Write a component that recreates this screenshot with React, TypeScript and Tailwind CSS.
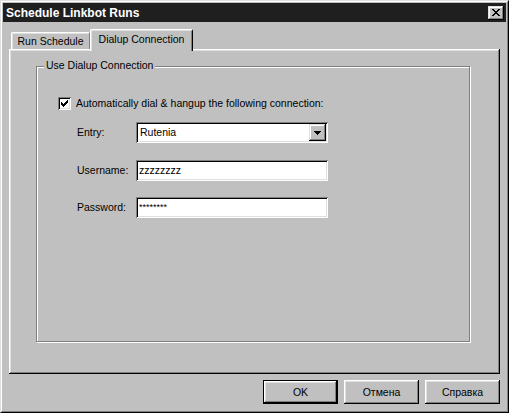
import React from "react";

const raised =
  "shadow-[inset_-1px_-1px_0_#000,inset_1px_1px_0_#fff,inset_-2px_-2px_0_#808080,inset_2px_2px_0_#dfdfdf]";
const raisedCap =
  "shadow-[inset_-1px_-1px_0_#000,inset_1px_1px_0_#dfdfdf,inset_-2px_-2px_0_#808080,inset_2px_2px_0_#fff]";
const sunken =
  "shadow-[inset_1px_1px_0_#808080,inset_-1px_-1px_0_#fff,inset_2px_2px_0_#000,inset_-2px_-2px_0_#dfdfdf]";

function CloseX() {
  const rows = [
    [0, 1, 6, 7],
    [1, 2, 5, 6],
    [2, 3, 4, 5],
    [3, 4],
    [2, 3, 4, 5],
    [1, 2, 5, 6],
    [0, 1, 6, 7],
  ];
  return (
    <svg width="8" height="7" viewBox="0 0 8 7" shapeRendering="crispEdges">
      {rows.map((r, y) =>
        r.map((x) => <rect key={`${x}-${y}`} x={x} y={y} width="1" height="1" fill="#000" />)
      )}
    </svg>
  );
}

function Check() {
  const cols = [2, 3, 4, 3, 2, 1, 0];
  return (
    <svg width="7" height="7" viewBox="0 0 7 7" shapeRendering="crispEdges">
      {cols.map((y, x) => (
        <rect key={x} x={x} y={y} width="1" height="3" fill="#000" />
      ))}
    </svg>
  );
}

function Arrow() {
  return (
    <svg width="7" height="4" viewBox="0 0 7 4" shapeRendering="crispEdges">
      <rect x="0" y="0" width="7" height="1" fill="#000" />
      <rect x="1" y="1" width="5" height="1" fill="#000" />
      <rect x="2" y="2" width="3" height="1" fill="#000" />
      <rect x="3" y="3" width="1" height="1" fill="#000" />
    </svg>
  );
}

function Btn({ label, def }: { label: string; def?: boolean }) {
  if (def) {
    return (
      <div className="w-[75px] h-[24px] border border-black">
        <div className={`w-full h-full flex items-center justify-center ${raised}`}>{label}</div>
      </div>
    );
  }
  return (
    <div className={`w-[75px] h-[24px] flex items-center justify-center ${raised}`}>{label}</div>
  );
}

export default function App() {
  return (
    <div className="w-[509px] h-[413px] bg-[#c0c0c0] border border-t-[#dfdfdf] border-l-[#dfdfdf] border-r-black border-b-black font-['Liberation_Sans',Arial,sans-serif] text-[10.5px] leading-[13px] text-black">
      <div className="h-full border border-t-white border-l-white border-r-[#808080] border-b-[#808080] flex flex-col">
        {/* Title bar */}
        <div className="mx-[1px] mt-[1px] h-[19px] bg-[#1f1f1f] flex items-center justify-between pl-[3px] pr-[2px]">
          <span className="text-white font-bold text-[12px] leading-[14px]">Schedule Linkbot Runs</span>
          <div className={`w-[16px] h-[14px] bg-[#c0c0c0] flex items-center justify-center ${raisedCap}`}>
            <CloseX />
          </div>
        </div>

        {/* Body */}
        <div className="flex-1 flex flex-col px-[7px]">
          {/* Tabs */}
          <div className="mt-[7px] flex items-end pl-[2px]">
            <div className="w-[79px] h-[17px] border-t border-l border-r border-t-white border-l-white border-r-[#808080] rounded-t-[2px] shadow-[inset_1px_1px_0_#dfdfdf] flex items-center justify-center">
              Run Schedule
            </div>
            <div className="relative z-10 w-[103px] h-[22px] -mb-[2px] bg-[#c0c0c0] border-t border-l border-r border-t-white border-l-white border-r-black rounded-t-[2px] shadow-[inset_1px_1px_0_#dfdfdf,inset_-1px_0_0_#808080] flex justify-center pt-[3px]">
              Dialup Connection
            </div>
          </div>

          {/* Panel */}
          <div className="h-[325px] pt-[17px] pl-[27px] shadow-[inset_-1px_-1px_0_#000,inset_1px_1px_0_#fff,inset_-2px_-2px_0_#808080,inset_2px_2px_0_#dfdfdf]">
            <div className="relative w-[434px] h-[276px] border border-[#808080] shadow-[inset_1px_1px_0_#fff,1px_1px_0_#fff] pl-[21px] pt-[30px]">
              <span className="absolute left-[7px] top-[-8px] px-[2px] bg-[#c0c0c0]">Use Dialup Connection</span>

              <div className="flex items-center gap-[5px] h-[13px]">
                <div className={`w-[13px] h-[13px] bg-white flex items-center justify-center ${sunken}`}>
                  <Check />
                </div>
                <span>Automatically dial &amp; hangup the following connection:</span>
              </div>

              <div className="ml-[19px] mt-[12px] flex items-center">
                <span className="w-[59px]">Entry:</span>
                <div className={`w-[192px] h-[21px] bg-white flex items-center justify-between pl-[4px] pr-[2px] ${sunken}`}>
                  <span>Rutenia</span>
                  <div className={`w-[17px] h-[17px] bg-[#c0c0c0] flex items-center justify-center ${raisedCap}`}>
                    <Arrow />
                  </div>
                </div>
              </div>

              <div className="ml-[19px] mt-[17px] flex items-center">
                <span className="w-[59px]">Username:</span>
                <div className={`w-[192px] h-[21px] bg-white flex items-center pl-[3px] ${sunken}`}>
                  <span>zzzzzzzz</span>
                </div>
              </div>

              <div className="ml-[19px] mt-[16px] flex items-center">
                <span className="w-[59px]">Password:</span>
                <div className={`w-[192px] h-[21px] bg-white flex items-center pl-[3px] ${sunken}`}>
                  <span className="text-[9px]">********</span>
                </div>
              </div>
            </div>
          </div>

          {/* Buttons */}
          <div className="mt-[6px] flex justify-end gap-[6px]">
            <Btn label="OK" def />
            <Btn label="Отмена" />
            <Btn label="Справка" />
          </div>
        </div>
      </div>
    </div>
  );
}
